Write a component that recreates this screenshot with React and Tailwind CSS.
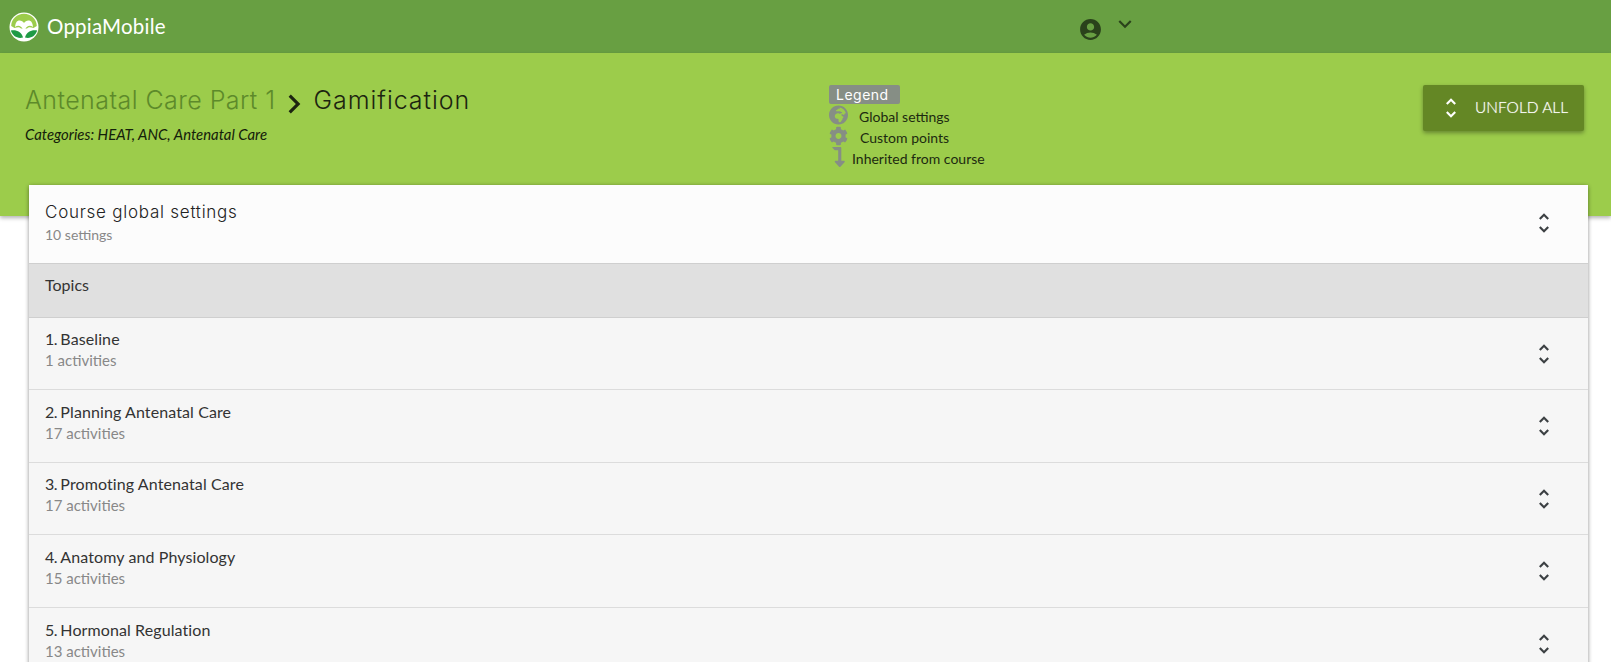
import { MdAccountCircle, MdExpandMore, MdUnfoldMore, MdChevronRight } from 'react-icons/md';
import { FaGlobeAfrica, FaCog, FaLevelDownAlt } from 'react-icons/fa';

const TOPICS = [
  { num: '1. ', title: 'Baseline', count: '1 activities', h: 'h-[72px]' },
  { num: '2. ', title: 'Planning Antenatal Care', count: '17 activities', h: 'h-[73px]' },
  { num: '3. ', title: 'Promoting Antenatal Care', count: '17 activities', h: 'h-[72px]' },
  { num: '4. ', title: 'Anatomy and Physiology', count: '15 activities', h: 'h-[73px]' },
  { num: '5. ', title: 'Hormonal Regulation', count: '13 activities', h: 'h-[73px]' },
];

function Logo() {
  return (
    <svg width="30" height="30" viewBox="0 0 30 30" className="shrink-0">
      <circle cx="15" cy="15" r="14.5" fill="#ffffff" />
      <path d="M2.2 14C2.5 6.8 8 1.8 15 1.8S27.5 6.8 27.8 14L24.5 16C22 15.5 20 14.5 18 16.5H12C10 14.5 8 15.5 5.5 16Z" fill="#9ccc4b" />
      <path d="M6 15C6.5 10.5 8 8.5 10.5 8.5C12.5 8.5 14 9.5 15 11C16 9.5 17.5 8.5 19.5 8.5C22 8.5 23.5 10.5 24 15C21 13 18 13.5 16 17.5H14C12 13.5 9 13 6 15Z" fill="#ffffff" />
      <path d="M1.8 18.5C7 17.5 12.5 19.5 14 25.5C8.5 27 3.5 24 1.8 18.5Z" fill="#1f9a46" />
      <path d="M28.2 18.5C23 17.5 17.5 19.5 16 25.5C21.5 27 26.5 24 28.2 18.5Z" fill="#1f9a46" />
    </svg>
  );
}

function LegendRow({ icon, label, labelClass }) {
  return (
    <div className="flex items-center h-[21px]">
      <span className="w-[19px] flex justify-center text-[#868e85]">{icon}</span>
      <span className={`text-[14px] mt-[4px] text-[#1c2a10] ${labelClass}`}>{label}</span>
    </div>
  );
}

export default function App() {
  return (
    <div className="h-[662px] overflow-hidden bg-white font-['Lato','Open_Sans',sans-serif]">
      <header className="h-[53px] bg-[#689f42] flex items-center">
        <div className="flex items-center gap-[8px] pl-[9px] w-[1078px]">
          <Logo />
          <span className="text-[20.5px] text-white tracking-[0.2px]">OppiaMobile</span>
        </div>
        <MdAccountCircle size={25} className="text-[#2a421b] mt-[5px]" />
        <MdExpandMore size={26} className="text-[#2a421b] ml-[9px] -mt-[6px]" />
      </header>

      <section className="h-[163px] bg-[#9ccc4b] shadow-[0_2px_4px_rgba(0,0,0,0.3)] flex items-start relative">
        <div className="w-[829px] pl-[25px] pt-[33px]">
          <div className="flex items-center h-[30px] font-['Inter',sans-serif] text-[25px]">
            <span className="text-[#5d8a2a] font-light tracking-[0.45px]">Antenatal Care Part 1</span>
            <MdChevronRight size={38} className="text-[#1c2410] ml-[-1px] mr-[1px] mt-[5px]" />
            <span className="text-[#1c2410] font-light tracking-[0.95px]">Gamification</span>
          </div>
          <p className="mt-[7px] text-[14.9px] italic text-[#14200a]">Categories: HEAT, ANC, Antenatal Care</p>
        </div>

        <div className="pt-[32px] w-[594px]">
          <span className="block w-[71px] h-[19px] rounded-[2px] bg-[#868e85] text-white text-[14px] leading-[19px] pl-[7px] font-['Inter',sans-serif] tracking-[0.5px]">Legend</span>
          <LegendRow icon={<FaGlobeAfrica size={20} />} label="Global settings" labelClass="ml-[11px]" />
          <LegendRow icon={<FaCog size={20} />} label="Custom points" labelClass="ml-[12px]" />
          <LegendRow icon={<FaLevelDownAlt size={20} />} label="Inherited from course" labelClass="ml-[4px]" />
        </div>

        <button className="mt-[32px] w-[161px] h-[46px] rounded-[2px] bg-[#648725] shadow-[0_2px_4px_rgba(0,0,0,0.35)] flex items-center text-white text-[15.5px] font-light">
          <MdUnfoldMore size={26} className="ml-[15px]" />
          <span className="ml-[11px] [text-shadow:0_0_1px_rgba(255,255,255,0.7)]">UNFOLD ALL</span>
        </button>
      </section>

      <main className="relative -mt-[31px] mx-[29px] w-[1559px] rounded-t-[2px] shadow-[0_1px_4px_rgba(0,0,0,0.45)] bg-[#f6f6f6]">
        <div className="h-[79px] bg-[#fcfcfc] border-b border-[#cfcfcf] flex items-center justify-between pl-[16px] pr-[31px]">
          <div className="-mt-[3px]">
            <h2 className="font-['Inter',sans-serif] text-[17px] leading-[22px] tracking-[0.75px] text-[#222] font-light">Course global settings</h2>
            <p className="text-[14px] leading-[20px] mt-[2px] text-[#888]">10 settings</p>
          </div>
          <MdUnfoldMore size={26} className="text-[#3c4043] -mt-[2px]" />
        </div>
        <div className="h-[54px] bg-[#e0e0e0] border-b border-[#cfcfcf] pl-[16px] pt-[11px] text-[16px] leading-[20px] text-[#333]">Topics</div>
        {TOPICS.map((t) => (
          <div key={t.title} className={`${t.h} border-b border-[#dcdcdc] flex items-center justify-between pl-[16px] pr-[31px]`}>
            <div className="-mt-[7px]">
              <div className="text-[16px] leading-[21px] text-[#333] tracking-[0.1px] -mt-[1px]">
                <span className="tracking-[-0.6px]">{t.num}</span>
                {t.title}
              </div>
              <div className="text-[15px] leading-[21px] text-[#888] mt-[1px]">{t.count}</div>
            </div>
            <MdUnfoldMore size={26} className="text-[#3c4043]" />
          </div>
        ))}
      </main>
    </div>
  );
}
